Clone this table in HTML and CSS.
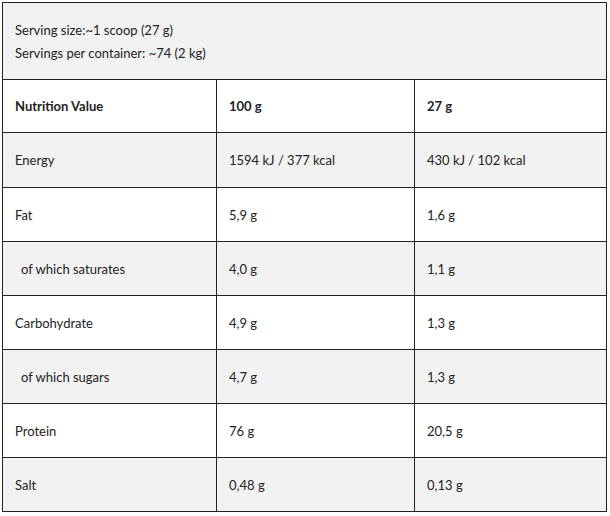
FILE: index.html
```html
<!DOCTYPE html>
<html>
<head>
<meta charset="utf-8">
<link rel="stylesheet" href="styles.css">
</head>
<body>
<div class="panel">
  <div class="serving">
    <div class="serving-line">Serving size:~1 scoop (27 g)</div>
    <div class="serving-line">Servings per container: ~74 (2 kg)</div>
  </div>
  <div class="row head">
    <div class="cell">Nutrition Value</div>
    <div class="cell">100 g</div>
    <div class="cell">27 g</div>
  </div>
  <div class="row alt tall">
    <div class="cell">Energy</div>
    <div class="cell">1594 kJ / 377 kcal</div>
    <div class="cell">430 kJ / 102 kcal</div>
  </div>
  <div class="row">
    <div class="cell">Fat</div>
    <div class="cell">5,9 g</div>
    <div class="cell">1,6 g</div>
  </div>
  <div class="row alt">
    <div class="cell sub">of which saturates</div>
    <div class="cell">4,0 g</div>
    <div class="cell">1,1 g</div>
  </div>
  <div class="row">
    <div class="cell">Carbohydrate</div>
    <div class="cell">4,9 g</div>
    <div class="cell">1,3 g</div>
  </div>
  <div class="row alt">
    <div class="cell sub">of which sugars</div>
    <div class="cell">4,7 g</div>
    <div class="cell">1,3 g</div>
  </div>
  <div class="row">
    <div class="cell">Protein</div>
    <div class="cell">76 g</div>
    <div class="cell">20,5 g</div>
  </div>
  <div class="row alt last">
    <div class="cell">Salt</div>
    <div class="cell">0,48 g</div>
    <div class="cell">0,13 g</div>
  </div>
</div>
</body>
</html>
```

FILE: styles.css
```css
html, body {
  margin: 0;
  padding: 0;
  background: #ffffff;
}
body {
  padding: 2px;
  font-family: "Lato", "Liberation Sans", sans-serif;
  font-size: 13px;
  color: #222222;
}
.panel {
  width: 603px;
  border: 1px solid #222222;
}
.serving {
  height: 77px;
  box-sizing: border-box;
  padding: 16px 12px 0 12px;
  background: #f2f2f2;
  border-bottom: 1px solid #222222;
}
.serving-line {
  line-height: 23px;
}
.row {
  display: grid;
  grid-template-columns: 214px 198px 191px;
  height: 54px;
  box-sizing: border-box;
  border-bottom: 1px solid #222222;
}
.row.head {
  height: 53px;
  font-weight: bold;
}
.row.tall {
  height: 55px;
}
.row.last {
  border-bottom: none;
  height: 53px;
}
.row.alt {
  background: #f2f2f2;
}
.cell {
  display: flex;
  align-items: center;
  box-sizing: border-box;
  min-width: 0;
  padding-left: 12px;
  border-right: 1px solid #222222;
}
.cell:last-child {
  border-right: none;
}
.sub {
  padding-left: 18px;
}
```
